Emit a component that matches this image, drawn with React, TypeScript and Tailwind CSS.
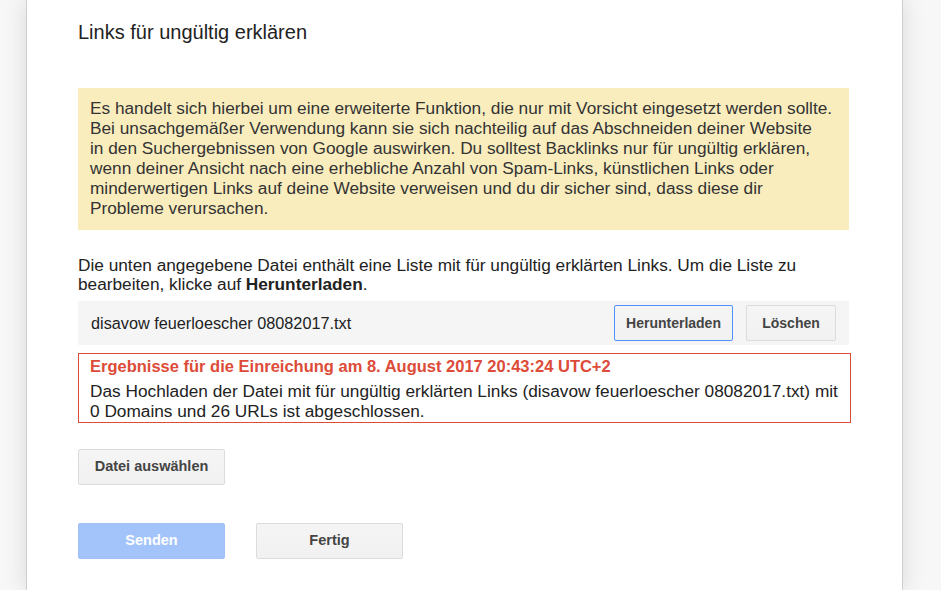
export default function App() {
  return (
    <div
      className="h-[590px] w-[941px] overflow-hidden bg-[#f7f7f7]"
      style={{ fontFamily: '"Liberation Sans", Arial, sans-serif' }}
    >
      <div className="ml-[26px] h-full w-[877px] border-x border-[#cfcfcf] bg-white pl-[51px] pr-[53px] pt-[20px] text-[#222] shadow-[0_0_22px_rgba(0,0,0,0.13)]">
        <h1 className="text-[20px] leading-[24px] text-[#222]">Links für ungültig erklären</h1>

        <div className="mt-[44px] whitespace-nowrap bg-[#f9edbe] pb-[12px] pl-[12px] pr-[10px] pt-[10px] text-[17.25px] leading-[20px] text-[#333]">
          Es handelt sich hierbei um eine erweiterte Funktion, die nur mit Vorsicht eingesetzt werden sollte.
          <br />
          Bei unsachgemäßer Verwendung kann sie sich nachteilig auf das Abschneiden deiner Website
          <br />
          in den Suchergebnissen von Google auswirken. Du solltest Backlinks nur für ungültig erklären,
          <br />
          wenn deiner Ansicht nach eine erhebliche Anzahl von Spam-Links, künstlichen Links oder
          <br />
          minderwertigen Links auf deine Website verweisen und du dir sicher sind, dass diese dir
          <br />
          Probleme verursachen.
        </div>

        <p className="mt-[26px] whitespace-nowrap text-[17.25px] leading-[19px] text-[#222]">
          Die unten angegebene Datei enthält eine Liste mit für ungültig erklärten Links. Um die Liste zu
          <br />
          bearbeiten, klicke auf <b>Herunterladen</b>.
        </p>

        <div className="mt-[7px] flex h-[44px] items-center bg-[#f5f5f5] pl-[13px] pr-[13px]">
          <span className="flex-1 text-[16.25px] text-[#222]">disavow feuerloescher 08082017.txt</span>
          <button className="h-[36px] w-[119px] rounded-[2px] border border-[#4d90fe] bg-gradient-to-b from-[#f5f5f5] to-[#f1f1f1] text-[14px] font-bold text-[#444]">
            Herunterladen
          </button>
          <button className="ml-[13px] h-[36px] w-[90px] rounded-[2px] border border-[#dcdcdc] bg-gradient-to-b from-[#f5f5f5] to-[#f1f1f1] text-[14px] font-bold text-[#444]">
            Löschen
          </button>
        </div>

        <div className="mr-[-2px] mt-[8px] whitespace-nowrap border border-[#dd4b39] pb-[1px] pl-[11px] pr-[10px] pt-[2px]">
          <div className="text-[16.5px] font-bold leading-[20px] text-[#dd4b39]">
            Ergebnisse für die Einreichung am 8. August 2017 20:43:24 UTC+2
          </div>
          <div className="mt-[5px] text-[17.25px] leading-[20px] text-[#222]">
            Das Hochladen der Datei mit für ungültig erklärten Links (disavow feuerloescher 08082017.txt) mit
            <br />
            0 Domains und 26 URLs ist abgeschlossen.
          </div>
        </div>

        <button className="mt-[26px] block h-[36px] w-[147px] rounded-[2px] border border-[#dcdcdc] bg-gradient-to-b from-[#f5f5f5] to-[#f1f1f1] text-[14.5px] font-bold text-[#444]">
          Datei auswählen
        </button>

        <div className="mt-[38px] flex gap-[31px]">
          <button className="h-[36px] w-[147px] rounded-[2px] border border-[#a0c1f5] bg-[#a3c4fa] text-[14.5px] font-bold text-white">
            Senden
          </button>
          <button className="h-[36px] w-[147px] rounded-[2px] border border-[#dcdcdc] bg-gradient-to-b from-[#f5f5f5] to-[#f1f1f1] text-[14.5px] font-bold text-[#444]">
            Fertig
          </button>
        </div>
      </div>
    </div>
  )
}
